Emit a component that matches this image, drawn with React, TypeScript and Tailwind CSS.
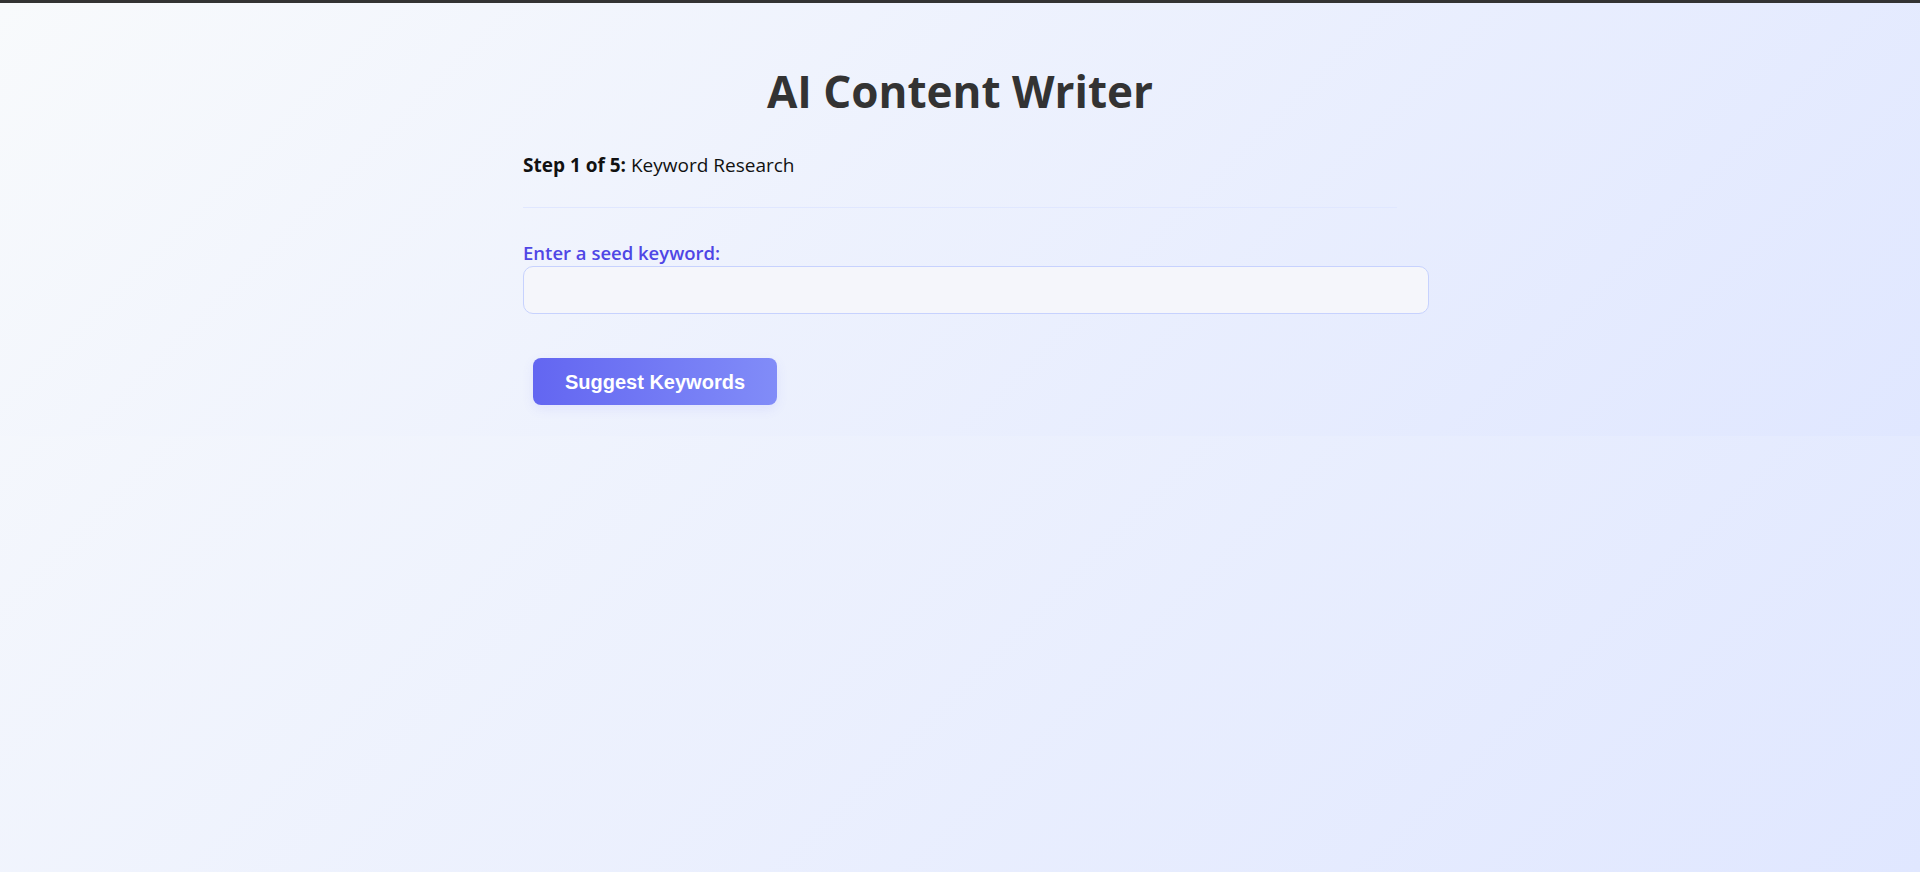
import React from "react";

export default function App() {
  return (
    <div className="min-h-screen w-full bg-[linear-gradient(135deg,#f8fafc_0%,#e0e7ff_100%)]">
      <div className="h-[3px] w-full bg-[#333333]" />
      <div className="w-full bg-[linear-gradient(135deg,#f8fafc_0%,#e0e7ff_100%)] pb-[31px]">
        <div className="mx-auto w-[874px] pt-[58px]">
          <h1 className="text-center font-['Open_Sans',sans-serif] text-[44px] font-bold leading-[60px] text-[#333333]">
            AI Content Writer
          </h1>
          <p className="mt-[32px] font-['Open_Sans',sans-serif] text-[19px] leading-[24px] text-[#111111]">
            <span className="font-bold">Step 1 of 5:</span> Keyword Research
          </p>
          <div className="mt-[30px] h-px w-full bg-[#e0e7ff]" />
          <label className="mt-[32px] block font-['Open_Sans',sans-serif] text-[18.5px] font-semibold leading-[26px] text-[#4f46e5]">
            Enter a seed keyword:
          </label>
          <input
            type="text"
            className="box-content block h-[46px] w-full rounded-[10px] border border-[#c7d2fe] bg-[#f5f6fb] px-[15px] font-['Open_Sans',sans-serif] text-[16px] outline-none"
          />
          <button className="ml-[10px] mt-[44px] flex h-[47px] w-[244px] items-center justify-center rounded-[8px] bg-[linear-gradient(90deg,#6366f1,#818cf8)] font-['Liberation_Sans',Arial,sans-serif] text-[20px] font-bold text-white shadow-[0_4px_12px_rgba(99,102,241,0.1)]">
            Suggest Keywords
          </button>
        </div>
      </div>
    </div>
  );
}
